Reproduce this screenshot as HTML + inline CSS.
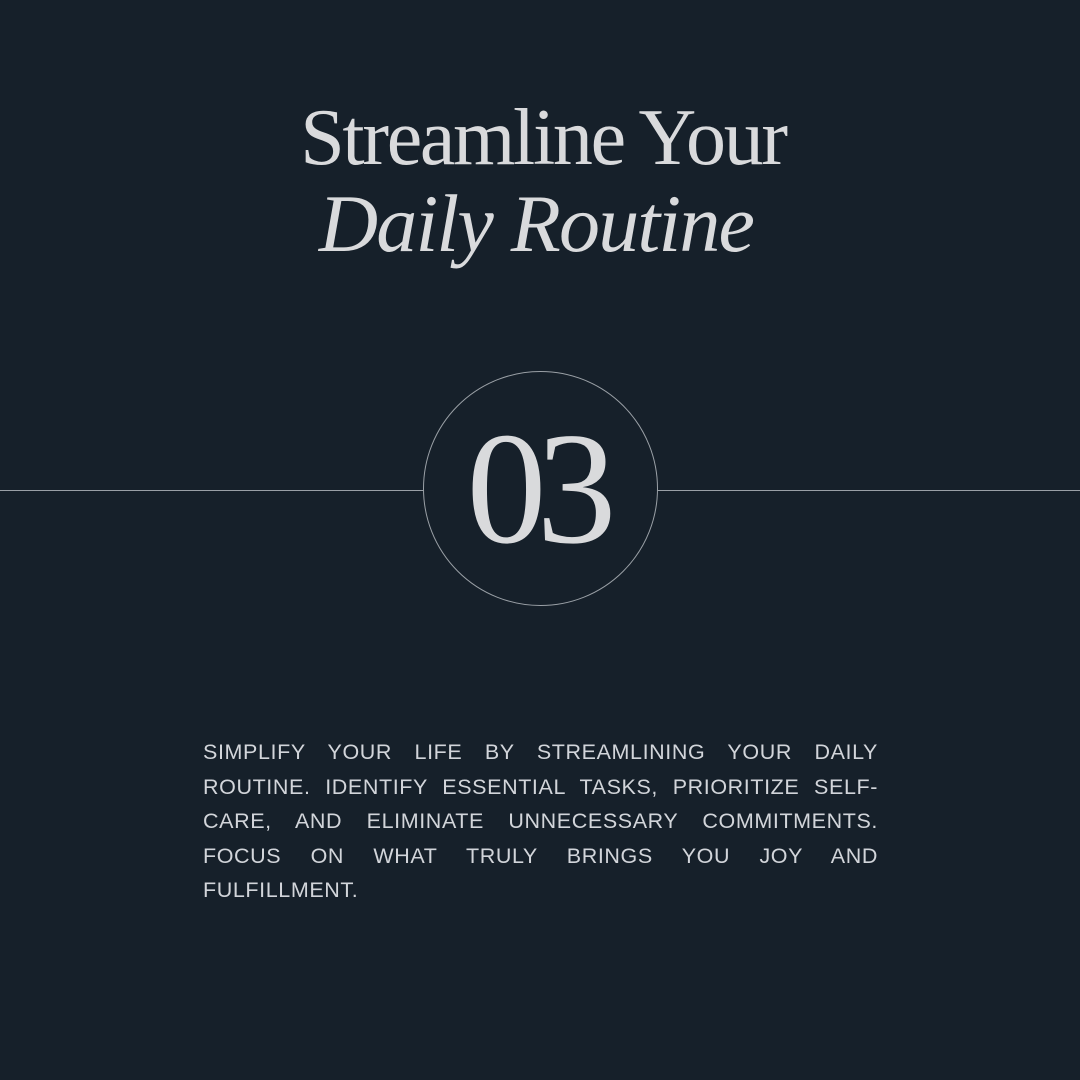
<!DOCTYPE html>
<html><head><style>
html,body{margin:0;padding:0}
body{width:1080px;height:1080px;background:#16202a;position:relative;overflow:hidden;color:#d4d6da}
.t{position:absolute;left:0;width:1080px;text-align:center;font-family:"Liberation Serif",serif;font-weight:normal;color:#d9dadc}
.l1{top:88px;font-size:80px;line-height:100px;letter-spacing:-2.3px;left:3px}
.l2{top:174px;font-size:82px;line-height:100px;font-style:italic;letter-spacing:-1.8px;left:-4px}
.line{position:absolute;left:0;width:1080px;top:490px;height:1px;background:#9aa0a6}
.c{position:absolute;left:423px;top:371px;width:233px;height:233px;border:1px solid #9aa0a6;border-radius:50%;background:#16202a}
.n{position:absolute;left:419px;top:371px;width:235px;height:235px;text-align:center;font-family:"Liberation Serif",serif;font-size:160px;line-height:235px;letter-spacing:-10px;color:#d9dadc}
.p{position:absolute;left:203px;top:735px;width:675px;font-family:"Liberation Sans",sans-serif;font-size:21.5px;line-height:34.5px;letter-spacing:0.6px;color:#d2d5da}
.p div{text-align:justify;text-align-last:justify;white-space:nowrap}
.p div.last{text-align-last:left}
</style></head><body>
<div class="t l1">Streamline Your</div>
<div class="t l2">Daily Routine</div>
<div class="line"></div>
<div class="c"></div>
<div class="n">03</div>
<div class="p">
<div>SIMPLIFY YOUR LIFE BY STREAMLINING YOUR DAILY</div>
<div>ROUTINE. IDENTIFY ESSENTIAL TASKS, PRIORITIZE SELF-</div>
<div>CARE, AND ELIMINATE UNNECESSARY COMMITMENTS.</div>
<div>FOCUS ON WHAT TRULY BRINGS YOU JOY AND</div>
<div class="last">FULFILLMENT.</div>
</div>
</body></html>
